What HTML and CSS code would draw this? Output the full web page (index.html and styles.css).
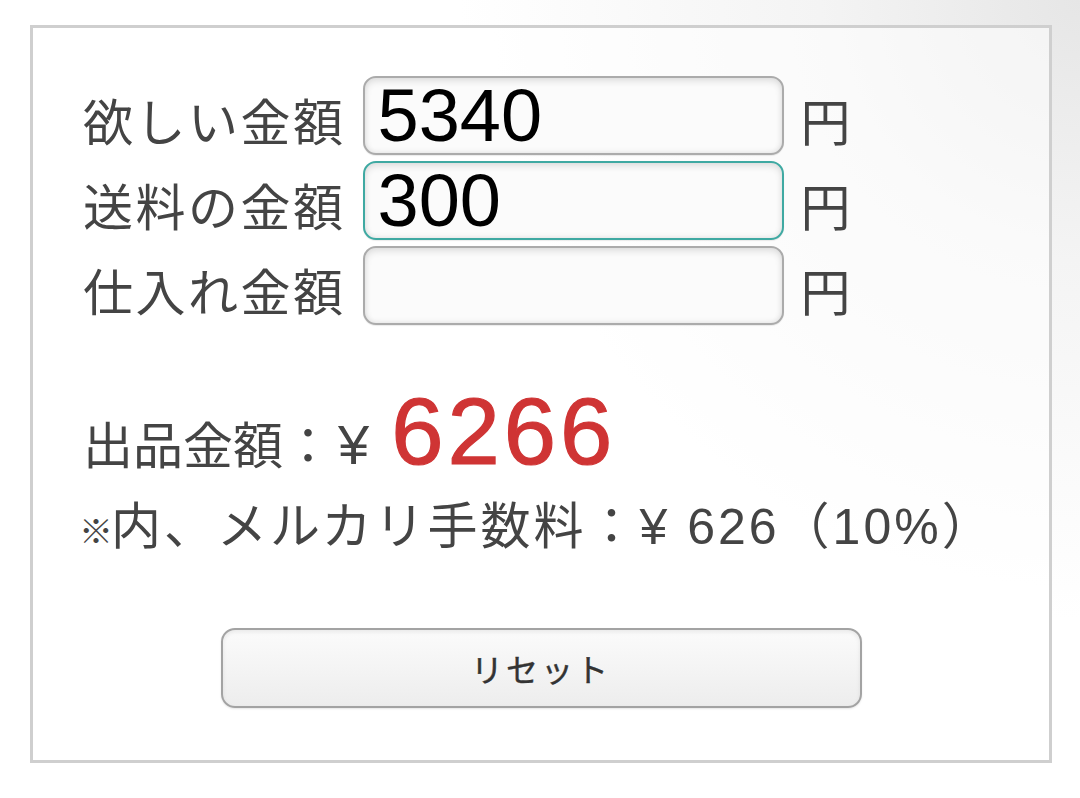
FILE: index.html
```html
<!DOCTYPE html>
<html lang="ja">
<head>
<meta charset="utf-8">
<title>メルカリ出品金額計算</title>
<link rel="stylesheet" href="styles.css">
</head>
<body>
<div class="card">
  <div class="form">
    <label class="label" for="want">欲しい金額</label>
    <input class="field" id="want" type="text" value="5340">
    <span class="unit">円</span>

    <label class="label" for="ship">送料の金額</label>
    <input class="field focus" id="ship" type="text" value="300">
    <span class="unit">円</span>

    <label class="label" for="cost">仕入れ金額</label>
    <input class="field" id="cost" type="text" value="">
    <span class="unit">円</span>
  </div>

  <div class="result">
    <p class="total">出品金額：<span class="yen">¥</span><span class="num">6266</span></p>
    <p class="fee"><span class="kome">※</span>内、メルカリ手数料：¥ 626（10%）</p>
  </div>

  <div class="actions">
    <button class="reset" type="button">リセット</button>
  </div>
</div>
</body>
</html>
```
FILE: styles.css
```css
html, body {
  margin: 0;
  padding: 0;
}
body {
  width: 1080px;
  height: 798px;
  overflow: hidden;
  background: radial-gradient(circle at 100% 0%, #e6e6e6 0px, #f4f4f4 260px, #ffffff 620px);
  font-family: "Liberation Sans", "Noto Sans CJK JP", sans-serif;
  color: #444;
}
.card {
  box-sizing: border-box;
  margin: 25px 0 0 30px;
  width: 1022px;
  height: 738px;
  border: 3px solid #cfcfcf;
  background: rgba(255, 255, 255, 0.55);
  padding: 48px 0 0 0;
}
.form {
  display: grid;
  grid-template-columns: auto 421px auto;
  column-gap: 17px;
  row-gap: 6px;
  align-items: baseline;
  justify-content: start;
  padding-left: 50px;
}
.label {
  font-size: 50px;
  letter-spacing: 2.5px;
  color: #444;
}
.unit {
  font-size: 50px;
  color: #444;
}
.field {
  box-sizing: border-box;
  width: 421px;
  height: 79px;
  margin: 0;
  padding: 0 13px;
  border: 2px solid #ababab;
  border-radius: 13px;
  background: #fbfbfb;
  box-shadow: inset 0 3px 7px rgba(0, 0, 0, 0.12), inset 0 -2px 5px rgba(0, 0, 0, 0.05), 0 1px 1px rgba(0, 0, 0, 0.08);
  font-family: "Liberation Sans", sans-serif;
  font-size: 74px;
  color: #000;
  outline: none;
}
.field.focus {
  border-color: #3fa9a2;
}
.result {
  margin-top: 62px;
  padding-left: 50px;
}
.total {
  margin: 0;
  font-size: 50px;
  line-height: 90px;
  color: #444;
}
.total .yen {
  font-size: 56px;
  margin-left: 5px;
  margin-right: 22px;
}
.total .num {
  font-size: 94px;
  letter-spacing: 4px;
  color: #cf3434;
  -webkit-text-stroke: 1.2px #cf3434;
}
.fee {
  margin: 0;
  font-size: 50px;
  letter-spacing: 3px;
  line-height: 70px;
  color: #444;
}
.fee .kome {
  font-size: 34px;
  letter-spacing: 0;
  margin-left: -4px;
  margin-right: -2px;
}
.actions {
  margin-top: 61px;
  display: flex;
  justify-content: center;
}
.reset {
  box-sizing: border-box;
  width: 641px;
  height: 80px;
  margin: 0;
  border: 2px solid #a3a3a3;
  border-radius: 14px;
  background: linear-gradient(#fbfbfb, #ededed);
  box-shadow: inset 0 2px 4px rgba(0, 0, 0, 0.08), 0 1px 2px rgba(0, 0, 0, 0.1);
  font-family: "Liberation Sans", "Noto Sans CJK JP", sans-serif;
  font-size: 32px;
  letter-spacing: 3px;
  color: #333;
  -webkit-text-stroke: 0.4px #333;
}
```
